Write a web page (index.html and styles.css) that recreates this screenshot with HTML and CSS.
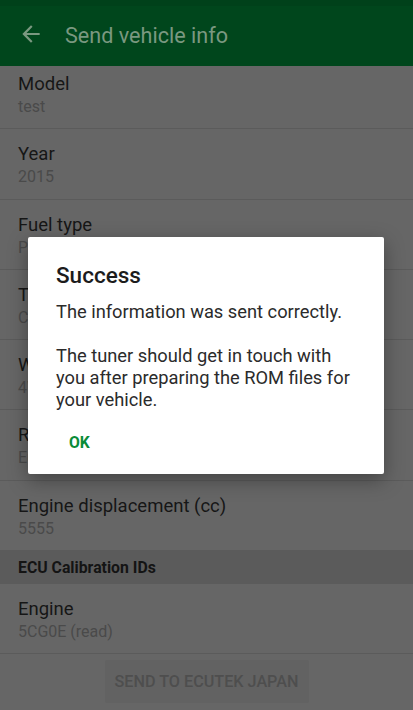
FILE: index.html
```html
<!DOCTYPE html>
<html lang="en">
<head>
<meta charset="utf-8">
<title>Send vehicle info</title>
<link rel="stylesheet" href="styles.css">
</head>
<body>
<div class="app">
  <div class="statusbar"></div>
  <header class="toolbar">
    <svg class="back" width="26" height="26" viewBox="0 0 24 24"><path d="M20 11H7.83l5.59-5.59L12 4l-8 8 8 8 1.41-1.41L7.83 13H20v-2z" fill="currentColor"/></svg>
    <h1 class="title">Send vehicle info</h1>
  </header>
  <main class="list">
    <div class="row row-first"><div class="label">Model</div><div class="value">test</div></div>
    <div class="row"><div class="label">Year</div><div class="value">2015</div></div>
    <div class="row"><div class="label">Fuel type</div><div class="value">Petrol</div></div>
    <div class="row"><div class="label">Transmission</div><div class="value">CVT</div></div>
    <div class="row"><div class="label">Wheel drive</div><div class="value">4WD</div></div>
    <div class="row"><div class="label">Region</div><div class="value">Europe</div></div>
    <div class="row"><div class="label">Engine displacement (cc)</div><div class="value">5555</div></div>
    <div class="section">ECU Calibration IDs</div>
    <div class="row"><div class="label">Engine</div><div class="value">5CG0E (read)</div></div>
  </main>
  <div class="footer"><button class="send">SEND TO ECUTEK JAPAN</button></div>
</div>
<div class="dialog" role="dialog">
  <h2 class="dialog-title">Success</h2>
  <p class="dialog-msg">The information was sent correctly.</p>
  <p class="dialog-msg dialog-msg-2">The tuner should get in touch with you after preparing the ROM files for your vehicle.</p>
  <div class="dialog-actions"><button class="ok">OK</button></div>
</div>
</body>
</html>
```
FILE: styles.css
```css
html, body {
  margin: 0;
  padding: 0;
}
body {
  width: 413px;
  height: 710px;
  overflow: hidden;
  background: #666666;
  font-family: Roboto, "Noto Sans", sans-serif;
  position: relative;
}
.app {
  display: flex;
  flex-direction: column;
  height: 710px;
}
.statusbar {
  height: 6px;
  background: #00411a;
}
.toolbar {
  height: 60px;
  background: #00461c;
  display: flex;
  align-items: center;
  color: #7a9880;
}
.back {
  margin-left: 18px;
  margin-top: -4px;
  width: 26px;
  height: 26px;
}
.title {
  margin: -2px 0 0 21px;
  font-size: 21.6px;
  font-weight: 400;
  color: #7a9880;
}
.list {
  display: flex;
  flex-direction: column;
}
.row {
  padding: 13px 18px 11.3px;
  border-bottom: 1px solid #5b5b5b;
}
.row-first {
  padding-top: 6px;
}
.label {
  font-size: 18.5px;
  line-height: 24px;
  color: #161616;
}
.value {
  margin-top: 1px;
  font-size: 16px;
  line-height: 20px;
  color: #4a4a4a;
}
.section {
  height: 33px;
  display: flex;
  align-items: center;
  padding: 0 18px;
  background: #5b5b5b;
  font-size: 15.8px;
  font-weight: 700;
  color: #141414;
}
.footer {
  display: flex;
  justify-content: center;
  padding-top: 6px;
}
.send {
  width: 204px;
  height: 43px;
  border: none;
  border-radius: 2px;
  background: #626262;
  color: #4e4e4e;
  font-family: Roboto, sans-serif;
  font-size: 16.2px;
  font-weight: 500;
  padding: 0;
}
.dialog {
  position: absolute;
  left: 28px;
  top: 237px;
  width: 356px;
  height: 237px;
  box-sizing: border-box;
  background: #ffffff;
  border-radius: 2px;
  box-shadow: 0 6px 20px rgba(0,0,0,0.35);
  padding: 24px 24px 0 28px;
  display: flex;
  flex-direction: column;
}
.dialog-title {
  margin: 0;
  font-size: 22.5px;
  line-height: 28px;
  font-weight: 500;
  color: #1c1c1c;
}
.dialog-msg {
  margin: 12px 0 0;
  font-size: 18.3px;
  line-height: 22px;
  color: #2b2b2b;
}
.dialog-msg-2 {
  margin-top: 22px;
}
.dialog-actions {
  margin-top: 13px;
  display: flex;
}
.ok {
  margin-left: 5px;
  height: 36px;
  padding: 0 8px;
  border: none;
  background: transparent;
  color: #0a8c38;
  font-family: Roboto, sans-serif;
  font-size: 15.7px;
  font-weight: 700;
}
```
